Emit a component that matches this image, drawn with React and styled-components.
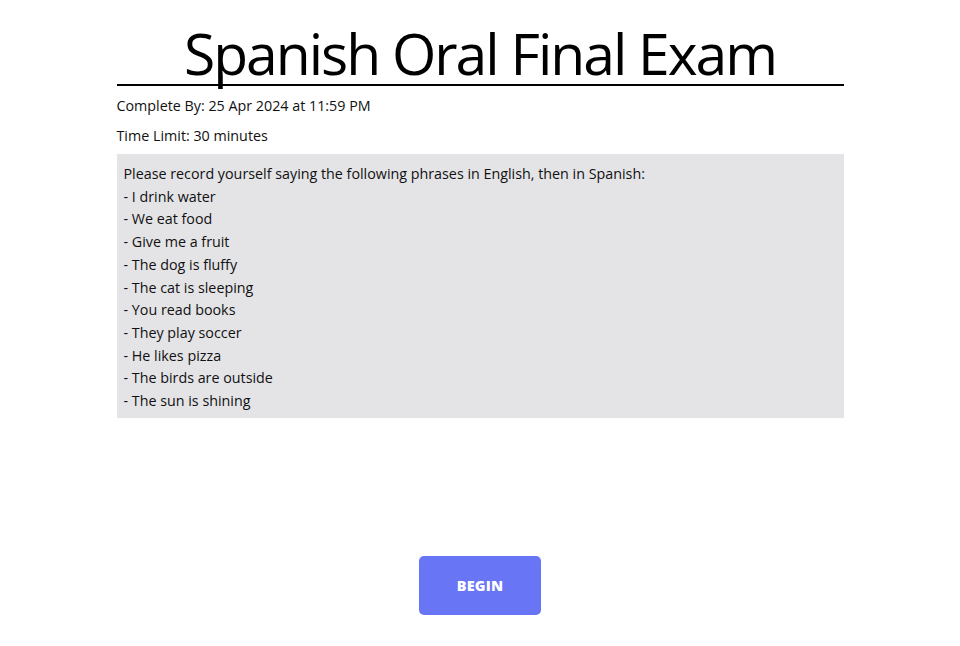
import React from "react";
import styled, { createGlobalStyle } from "styled-components";

const GlobalStyle = createGlobalStyle`
  body {
    margin: 0;
    background: #ffffff;
    font-family: "Open Sans", "Noto Sans", sans-serif;
    color: #111111;
  }
`;

const Page = styled.main`
  width: 727px;
  margin: 0 auto;
  padding-top: 16px;
  display: flex;
  flex-direction: column;
`;

const Title = styled.h1`
  margin: 0;
  padding-top: 6px;
  font-size: 57px;
  font-weight: 400;
  letter-spacing: -2px;
  line-height: 62px;
  text-align: center;
  color: #000;
  border-bottom: 2px solid #000;
`;

const Meta = styled.p`
  margin: 0;
  font-size: 14.3px;
  line-height: 30px;

  &:first-of-type {
    margin-top: 5px;
  }
`;

const Prompt = styled.div`
  margin-top: 3px;
  background: #e4e4e7;
  padding: 9px 7px 5px;
  font-size: 14.3px;
  line-height: 22.7px;
  white-space: pre-line;
`;

const Footer = styled.div`
  display: flex;
  justify-content: center;
  margin-top: 138px;
`;

const BeginButton = styled.button`
  width: 122px;
  height: 59px;
  border: none;
  border-radius: 5px;
  background: #6875f5;
  color: #fff;
  font-family: "Open Sans", sans-serif;
  font-weight: 800;
  font-size: 14.5px;
  letter-spacing: 0.2px;
  cursor: pointer;
`;

const phrases = [
  "I drink water",
  "We eat food",
  "Give me a fruit",
  "The dog is fluffy",
  "The cat is sleeping",
  "You read books",
  "They play soccer",
  "He likes pizza",
  "The birds are outside",
  "The sun is shining",
];

export default function App() {
  return (
    <>
      <GlobalStyle />
      <Page>
        <Title>Spanish Oral Final Exam</Title>
        <Meta>Complete By: 25 Apr 2024 at 11:59 PM</Meta>
        <Meta>Time Limit: 30 minutes</Meta>
        <Prompt>
          {"Please record yourself saying the following phrases in English, then in Spanish:\n" +
            phrases.map((p) => `- ${p}`).join("\n")}
        </Prompt>
        <Footer>
          <BeginButton>BEGIN</BeginButton>
        </Footer>
      </Page>
    </>
  );
}
